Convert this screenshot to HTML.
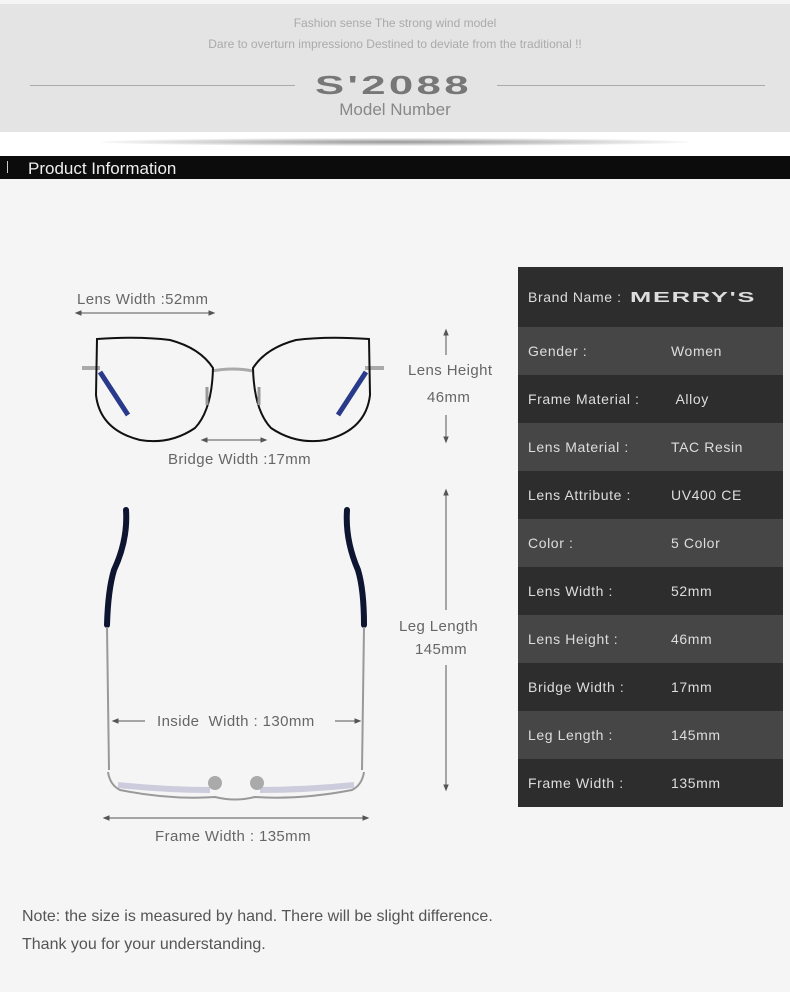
<!DOCTYPE html>
<html><head><meta charset="utf-8"><style>
*{margin:0;padding:0;box-sizing:border-box}
body{width:790px;height:992px;background:#f5f5f5;font-family:"Liberation Sans",sans-serif;position:relative;overflow:hidden;color:#555}
.a{position:absolute;white-space:nowrap}
.top{position:absolute;left:0;top:4px;width:790px;height:128px;background:#e4e4e4}
.bar{position:absolute;left:0;top:156px;width:790px;height:23px;background:#0c0c0c}
table{position:absolute;left:518px;top:267px;width:265px;border-collapse:collapse;font-size:14px;color:#ddd;letter-spacing:.6px}
td{padding-left:10px;height:48px}
tr:nth-child(odd){background:#2d2d2d}
tr:nth-child(even){background:#464646}
td.v{padding-left:0}
.lbl{font-size:15px;color:#666;letter-spacing:.4px}
</style></head><body>
<div class="top"></div>
<div class="a" style="left:0;top:16px;width:790px;text-align:center;font-size:12px;color:#aaa">Fashion sense The strong wind model</div>
<div class="a" style="left:0;top:37px;width:790px;text-align:center;font-size:12px;color:#aaa">Dare to overturn impressiono Destined to deviate from the traditional !!</div>
<div class="a" style="left:30px;top:85px;width:265px;height:1px;background:#aaa"></div>
<div class="a" style="left:497px;top:85px;width:268px;height:1px;background:#aaa"></div>
<div class="a" style="left:315px;top:70px;font-size:26px;font-weight:bold;color:#777;letter-spacing:2px;transform:scaleX(1.68);transform-origin:left">S'2088</div>
<div class="a" style="left:0;top:100px;width:790px;text-align:center;font-size:17px;color:#888">Model Number</div>
<div class="a" style="left:0;top:132px;width:790px;height:24px;background:#fff"></div>
<div class="a" style="left:100px;top:138px;width:590px;height:8px;border-radius:50%;background:radial-gradient(ellipse at center,#999 0%,#ccc 40%,rgba(255,255,255,0) 75%)"></div>
<div class="bar"></div>
<div class="a" style="left:7px;top:161px;width:1px;height:12px;background:#ccc"></div>
<div class="a" style="left:28px;top:159px;font-size:17px;color:#eee">Product Information</div>

<div class="a lbl" style="left:77px;top:291px">Lens Width :52mm</div>
<svg class="a" style="left:0;top:0" width="790" height="992">
<g stroke="#555" stroke-width="1" fill="#555">
<line x1="76" y1="313" x2="214" y2="313"/><path d="M76 313l5-2v4zM214 313l-5-2v4z"/>
<line x1="202" y1="440" x2="266" y2="440"/><path d="M202 440l5-2v4zM266 440l-5-2v4z"/>
<line x1="446" y1="330" x2="446" y2="355"/><path d="M446 330l-2 5h4z"/>
<line x1="446" y1="415" x2="446" y2="442"/><path d="M446 442l-2-5h4z"/>
<line x1="446" y1="490" x2="446" y2="610"/><path d="M446 490l-2 5h4z"/>
<line x1="446" y1="665" x2="446" y2="790"/><path d="M446 790l-2-5h4z"/>
<line x1="113" y1="721" x2="145" y2="721"/><path d="M113 721l5-2v4z"/>
<line x1="335" y1="721" x2="360" y2="721"/><path d="M360 721l-5-2v4z"/>
<line x1="104" y1="818" x2="368" y2="818"/><path d="M104 818l5-2v4zM368 818l-5-2v4z"/>
</g>
<g fill="none">
<path d="M82 368H100M365 368H384" stroke="#aaa" stroke-width="4"/>
<path d="M212 371Q233 367 253 371" stroke="#aaa" stroke-width="3"/>
<path d="M97 339Q140 336 170 340Q200 348 213 368Q212 410 195 428Q170 445 140 440Q100 430 96 395Z" stroke="#111" stroke-width="2"/>
<path d="M369 339Q326 336 296 340Q266 348 253 368Q254 410 271 428Q296 445 326 440Q366 430 370 395Z" stroke="#111" stroke-width="2"/>
<path d="M100 372Q115 395 128 415M366 372Q351 395 338 415" stroke="#2a3a8a" stroke-width="5"/>
<path d="M207 387v18M259 387v18" stroke="#999" stroke-width="3"/>
</g>
<g fill="none">
<path d="M126 510Q128 540 114 570Q108 590 107 625" stroke="#0d1530" stroke-width="6" stroke-linecap="round"/>
<path d="M347 510Q345 540 358 570Q364 590 364 625" stroke="#0d1530" stroke-width="6" stroke-linecap="round"/>
<path d="M107 627L109 770M364 627L362 770" stroke="#999" stroke-width="2"/>
<path d="M108 772Q110 785 120 790Q170 800 215 797Q235 802 255 797Q300 800 352 790Q362 785 364 772" stroke="#999" stroke-width="2"/>
<path d="M118 785Q165 790 210 790M260 790Q305 790 354 785" stroke="#ccd" stroke-width="6"/>
</g>
<circle cx="215" cy="783" r="7" fill="#aaa"/><circle cx="257" cy="783" r="7" fill="#aaa"/>
</svg>
<div class="a lbl" style="left:168px;top:451px">Bridge Width :17mm</div>
<div class="a lbl" style="left:408px;top:362px">Lens Height</div>
<div class="a lbl" style="left:427px;top:389px">46mm</div>
<div class="a lbl" style="left:399px;top:618px">Leg Length</div>
<div class="a lbl" style="left:415px;top:641px">145mm</div>
<div class="a lbl" style="left:157px;top:713px">Inside&nbsp; Width : 130mm</div>
<div class="a lbl" style="left:155px;top:828px">Frame Width : 135mm</div>

<table>
<tr style="height:60px"><td colspan="2">Brand Name : <span style="font-weight:bold;font-size:15px;letter-spacing:1px;display:inline-block;transform:scaleX(1.7);transform-origin:left;margin-left:4px">MERRY'S</span></td></tr>
<tr><td style="width:153px">Gender :</td><td class="v">Women</td></tr>
<tr><td>Frame Material :</td><td class="v">&nbsp;Alloy</td></tr>
<tr><td>Lens Material :</td><td class="v">TAC Resin</td></tr>
<tr><td>Lens Attribute :</td><td class="v">UV400 CE</td></tr>
<tr><td>Color :</td><td class="v">5 Color</td></tr>
<tr><td>Lens Width :</td><td class="v">52mm</td></tr>
<tr><td>Lens Height :</td><td class="v">46mm</td></tr>
<tr><td>Bridge Width :</td><td class="v">17mm</td></tr>
<tr style="height:47px"><td>Leg Length :</td><td class="v">145mm</td></tr>
<tr><td>Frame Width :</td><td class="v">135mm</td></tr>
</table>

<div class="a" style="left:22px;top:908px;font-size:16px;color:#555">Note: the size is measured by hand. There will be slight difference.</div>
<div class="a" style="left:22px;top:936px;font-size:16px;color:#555">Thank you for your understanding.</div>
</body></html>
